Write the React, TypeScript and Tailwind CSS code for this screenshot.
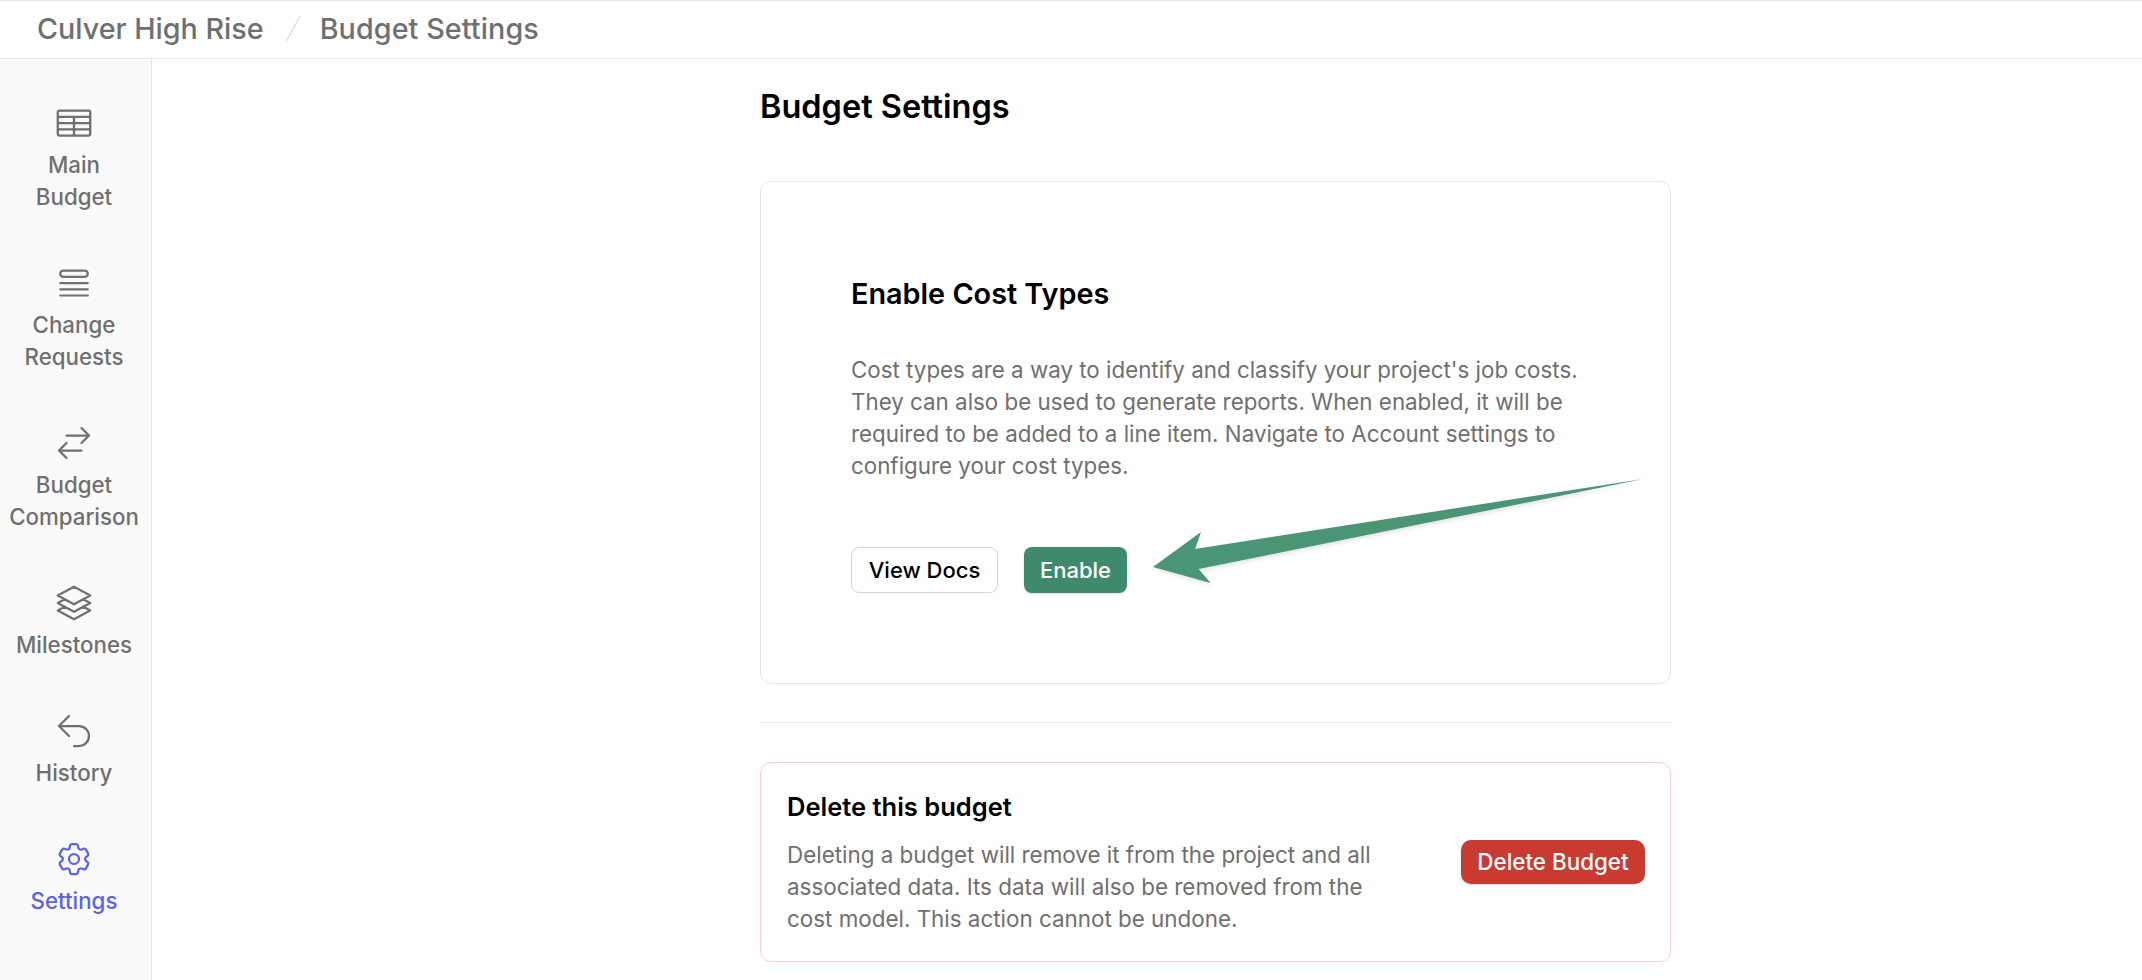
import React from "react";
import {
  HiOutlineArrowUturnLeft,
  HiOutlineArrowsRightLeft,
  HiOutlineCog6Tooth,
  HiOutlineQueueList,
  HiOutlineSquare3Stack3D,
  HiOutlineTableCells,
} from "react-icons/hi2";

const navItems = [
  { label: ["Main", "Budget"], icon: HiOutlineTableCells },
  { label: ["Change", "Requests"], icon: HiOutlineQueueList },
  { label: ["Budget", "Comparison"], icon: HiOutlineArrowsRightLeft },
  { label: ["Milestones"], icon: HiOutlineSquare3Stack3D },
  { label: ["History"], icon: HiOutlineArrowUturnLeft },
  { label: ["Settings"], icon: HiOutlineCog6Tooth, active: true },
];

const Sidebar: React.FC = () => (
  <aside className="w-[152px] shrink-0 border-r border-[#e5e5e5] bg-[#fafafa] pr-[3px] pt-[48px]">
    <nav className="flex flex-col gap-[54px]">
      {navItems.map((item) => (
        <a
          key={item.label.join(" ")}
          className={`flex flex-col items-center text-center text-[22.3px] font-medium leading-[32px] ${
            item.active ? "text-[#5b62ea]" : "text-[#6f6f6f]"
          }`}
        >
          <item.icon className="-mt-[4px] mb-[6px] size-[40px] [stroke-width:1.35]" />
          {item.label.map((line) => (
            <span key={line}>{line}</span>
          ))}
        </a>
      ))}
    </nav>
  </aside>
);

const CostArrow: React.FC = () => (
  <svg
    className="absolute left-[379px] top-[285px] drop-shadow-[1px_2px_2px_rgba(0,0,0,0.12)]"
    width="520"
    height="130"
    viewBox="1140 467 520 130"
  >
    <polygon
      points="1643,479 1195,549 1201,532 1153,567 1210.6,583 1198.5,569"
      fill="#4a9576"
    />
  </svg>
);

export default function App() {
  return (
    <div className="flex h-[980px] flex-col overflow-hidden bg-white font-['Inter',sans-serif]">
      <header className="flex h-[59px] shrink-0 items-center border-y border-[#e5e5e5] pb-[2px] pl-[37px] text-[28.7px] font-medium text-[#6f6f6f]">
        <span>Culver High Rise</span>
        <svg className="ml-[21px] mr-[19px]" width="16" height="28" viewBox="0 0 16 28">
          <line x1="15" y1="1" x2="1" y2="27" stroke="#cfcfcf" strokeWidth="1" />
        </svg>
        <span className="tracking-[0.1px]">Budget Settings</span>
      </header>
      <div className="flex flex-1 overflow-hidden">
        <Sidebar />
        <main className="ml-[608px] w-[911px]">
          <h1 className="mt-[29px] text-[32.5px] font-semibold leading-[38px] text-black">
            Budget Settings
          </h1>
          <section className="relative mt-[55px] h-[503px] rounded-[11px] border border-[#e5e5e5] pl-[90px] pt-[93px]">
            <h2 className="text-[28.8px] font-semibold leading-[38px] text-black">
              Enable Cost Types
            </h2>
            <p className="mt-[41px] w-[760px] text-[22.35px] leading-[32px] text-[#6f6f6f]">
              Cost types are a way to identify and classify your project's job costs. They can also be
              used to generate reports. When enabled, it will be required to be added to a line item.
              Navigate to Account settings to configure your cost types.
            </p>
            <div className="mt-[65px] flex gap-[26px]">
              <button className="h-[46px] w-[147px] rounded-[8px] border border-[#d4d4d4] bg-white text-[22px] font-medium text-black">
                View Docs
              </button>
              <button className="h-[46px] w-[103px] rounded-[8px] bg-[#3f8a6c] text-[22px] font-medium text-white shadow-sm">
                Enable
              </button>
            </div>
            <CostArrow />
          </section>
          <hr className="mt-[38px] border-[#e5e5e5]" />
          <section className="mt-[39px] flex h-[200px] items-center justify-between rounded-[11px] border border-[#f7cfcd] pl-[26px] pr-[25px]">
            <div>
              <h3 className="text-[25.5px] font-semibold leading-[36px] text-black">Delete this budget</h3>
              <p className="mt-[14px] w-[620px] text-[22.4px] leading-[32px] text-[#6f6f6f]">
                Deleting a budget will remove it from the project and all associated data. Its data will
                also be removed from the cost model. This action cannot be undone.
              </p>
            </div>
            <button className="h-[44px] w-[184px] rounded-[10px] bg-[#c93a31] text-[22.4px] font-medium text-white shadow-sm">
              Delete Budget
            </button>
          </section>
        </main>
      </div>
    </div>
  );
}
